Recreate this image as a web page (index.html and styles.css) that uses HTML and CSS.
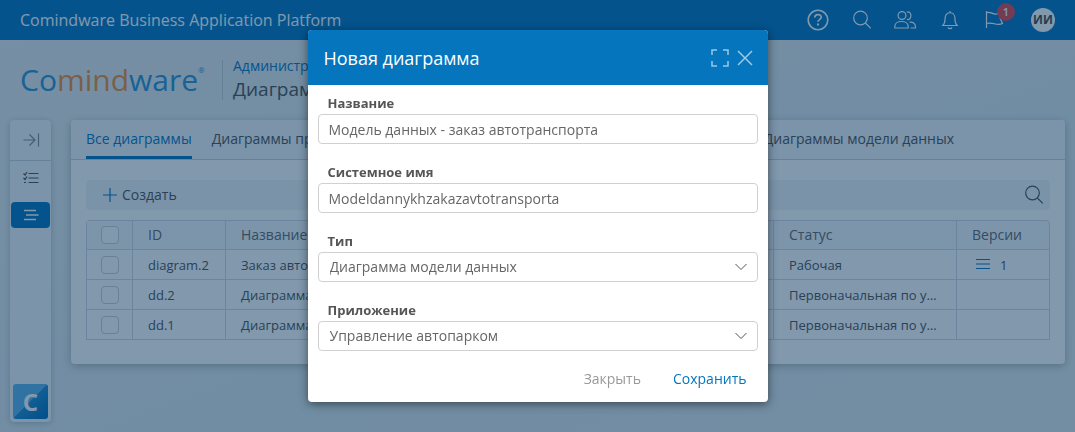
FILE: index.html
```html
<!DOCTYPE html>
<html lang="ru">
<head>
    <meta charset="UTF-8">
    <title>Comindware Business Application Platform</title>
    <link rel="stylesheet" href="styles.css">
</head>
<body>

<header class="topbar">
    <div class="topbar-title">Comindware Business Application Platform</div>
    <button class="icon-btn" aria-label="Справка">
        <svg width="24" height="24" viewBox="0 0 24 24"><circle cx="12" cy="12" r="9.8" stroke-width="1.6"/><path d="M8.8 9.6c0-4 6.400-4 6.400-.4 0 2.400-3.200 2.400-3.200 4.600" stroke-width="1.700"/><path d="M12 15.500v2" stroke-width="2"/></svg>
    </button>
    <button class="icon-btn" aria-label="Поиск">
        <svg width="24" height="24" viewBox="0 0 24 24"><circle cx="10.500" cy="10" r="6.800"/><path d="M15.400 15l5.400 5.400"/></svg>
    </button>
    <button class="icon-btn" aria-label="Пользователи">
        <svg width="24" height="24" viewBox="0 0 24 24"><circle cx="8" cy="7.500" r="3.900"/><path d="M.8 20v-1.500c0-6.700 13.400-6.700 13.400 0V20zM12.800 4.200c5.400-2 5.400 8.600.2 7.200M15.500 14.200c3.800-.4 6 1.500 6 4.500V20H16.500"/></svg>
    </button>
    <button class="icon-btn" aria-label="Уведомления">
        <svg width="24" height="24" viewBox="0 0 24 24"><path d="M4.800 17.500c2-2 2.300-4 2.300-7.500 0-7 9.800-7 9.800 0 0 3.500.3 5.500 2.300 7.500zM10 19.500c.5 1.500 3.500 1.500 4 0M12 3v1.500"/></svg>
    </button>
    <button class="icon-btn" aria-label="Задачи">
        <svg width="24" height="24" viewBox="0 0 24 24"><path d="M4.500 3v17M4.500 5c3-2.500 6.500 2 10 1 1-.2 2-.5 6-1l-2.500 5 2.500 5.500c-6 3-9.500-2-16 0"/></svg>
        <span class="badge">1</span>
    </button>
    <button class="avatar">ИИ</button>
</header>

<div class="heading">
    <div class="logo">Co<span>mind</span>ware<sup>®</sup></div>
    <div class="crumbs">
        <a href="#">Администрирование</a>
        <h1>Диаграммы</h1>
    </div>
</div>

<div class="layout">
    <nav class="sidebar">
        <button class="side-toggle" aria-label="Развернуть">
            <svg width="18" height="18" viewBox="0 0 18 18"><path d="M1.500 9h11M7.500 3.500L13 9l-5.500 5.500M16.500 2.500v13"/></svg>
        </button>
        <button class="side-item" aria-label="Задачи">
            <svg width="18" height="18" viewBox="0 0 18 18"><path d="M6.500 4.500h10M6.500 9h10M6.500 13.500h10M1.500 4.500L3 6l2-3M1.500 9L3 10.500l2-3M2 13.500h2"/></svg>
        </button>
        <button class="side-item active" aria-label="Диаграммы">
            <svg width="18" height="18" viewBox="0 0 18 18"><path d="M2 4.500h12M4 9h12.500M2 13.500h12" stroke-width="1.500"/></svg>
        </button>
        <a class="side-logo" href="#" aria-label="Comindware">C</a>
    </nav>

    <main class="panel">
        <div class="tabs">
            <button class="tab active">Все диаграммы</button>
            <button class="tab wide">Диаграммы процессов</button>
            <button class="tab">Диаграммы модели данных</button>
        </div>
        <div class="panel-body">
            <div class="toolbar">
                <button class="create">
                    <svg width="14" height="14" viewBox="0 0 14 14"><path d="M7 0v14M0 7h14"/></svg>
                    Создать
                </button>
                <button class="icon-btn" aria-label="Поиск">
                    <svg width="24" height="24" viewBox="0 0 24 24"><circle cx="10.500" cy="10" r="6.800"/><path d="M15.400 15l5.400 5.400"/></svg>
                </button>
            </div>
            <table>
                <colgroup>
                    <col class="col-check">
                    <col class="col-id">
                    <col>
                    <col class="col-status">
                    <col class="col-versions">
                </colgroup>
                <thead>
                <tr>
                    <th><input type="checkbox" aria-label="Выбрать все"></th>
                    <th>ID</th>
                    <th>Название</th>
                    <th>Статус</th>
                    <th>Версии</th>
                </tr>
                </thead>
                <tbody>
                <tr>
                    <td><input type="checkbox" aria-label="diagram.2"></td>
                    <td>diagram.2</td>
                    <td>Заказ автотранспорта</td>
                    <td>Рабочая</td>
                    <td class="versions"><svg width="14" height="12" viewBox="0 0 14 12"><path d="M0 1.500h14M0 6h14M0 10.500h14"/></svg>1</td>
                </tr>
                <tr>
                    <td><input type="checkbox" aria-label="dd.2"></td>
                    <td>dd.2</td>
                    <td>Диаграмма</td>
                    <td>Первоначальная по умолчанию</td>
                    <td></td>
                </tr>
                <tr>
                    <td><input type="checkbox" aria-label="dd.1"></td>
                    <td>dd.1</td>
                    <td>Диаграмма</td>
                    <td>Первоначальная по умолчанию</td>
                    <td></td>
                </tr>
                </tbody>
            </table>
        </div>
    </main>
</div>

<div class="overlay">
    <form class="modal" role="dialog" aria-labelledby="modal-title">
        <div class="modal-header">
            <h2 id="modal-title">Новая диаграмма</h2>
            <button type="button" aria-label="Развернуть">
                <svg width="18" height="18" viewBox="0 0 18 18"><path d="M1 6V1h5M12 1h5v5M17 12v5h-5M6 17H1v-5"/></svg>
            </button>
            <button type="button" aria-label="Закрыть окно">
                <svg width="18" height="18" viewBox="0 0 18 18"><path d="M2 2l14 14M16 2L2 16"/></svg>
            </button>
        </div>
        <div class="modal-body">
            <div class="field">
                <label for="name">Название</label>
                <input id="name" type="text" value="Модель данных - заказ автотранспорта">
            </div>
            <div class="field">
                <label for="alias">Системное имя</label>
                <input id="alias" type="text" value="Modeldannykhzakazavtotransporta">
            </div>
            <div class="field">
                <label for="type">Тип</label>
                <div class="select">
                    <select id="type">
                        <option>Диаграмма модели данных</option>
                    </select>
                    <svg width="12" height="8" viewBox="0 0 12 8"><path d="M.5 1L6 6.500 11.500 1"/></svg>
                </div>
            </div>
            <div class="field">
                <label for="app">Приложение</label>
                <div class="select">
                    <select id="app">
                        <option>Управление автопарком</option>
                    </select>
                    <svg width="12" height="8" viewBox="0 0 12 8"><path d="M.5 1L6 6.500 11.500 1"/></svg>
                </div>
            </div>
        </div>
        <div class="modal-footer">
            <button type="button">Закрыть</button>
            <button type="submit" class="primary">Сохранить</button>
        </div>
    </form>
</div>

</body>
</html>
```
FILE: styles.css
```css
* {
    box-sizing: border-box;
}

body {
    margin: 0;
    min-height: 100vh;
    display: flex;
    flex-direction: column;
    font: 14px/20px "Open Sans", sans-serif;
    color: #505050;
    background: linear-gradient(160deg, #e9ecea, #dfe9ea 60%, #e4e9ea);
}

button, input, select {
    font: inherit;
    color: inherit;
}

button {
    padding: 0;
    border: 0;
    background: none;
}

a {
    color: #0575bd;
    text-decoration: none;
}

svg {
    display: block;
    fill: none;
    stroke: currentColor;
    stroke-width: 1.2;
}

/* top bar */

.topbar {
    display: flex;
    align-items: center;
    gap: 20px;
    height: 40px;
    padding: 0 20px;
    color: #fff;
    background: #0575bd;
}

.topbar-title {
    flex: 1;
    font-size: 16px;
}

.icon-btn {
    position: relative;
    width: 24px;
    height: 24px;
}

.badge {
    position: absolute;
    top: -5px;
    right: -9px;
    width: 18px;
    height: 18px;
    border-radius: 9px;
    font-size: 11px;
    line-height: 18px;
    font-weight: 600;
    background: #e0474c;
}

.avatar {
    width: 24px;
    height: 24px;
    margin-left: 5px;
    border-radius: 50%;
    font-size: 12px;
    font-weight: 700;
    color: #444;
    background: #fff;
}

/* heading */

.heading {
    display: flex;
    align-items: center;
    height: 80px;
    padding-left: 20px;
}

.logo {
    display: flex;
    width: 202px;
    font-size: 30px;
    line-height: 40px;
    font-weight: 400;
    color: #2b92d0;
}

.logo span {
    color: #ee8f35;
}

.logo sup {
    font-size: 8px;
    line-height: 20px;
}

.crumbs {
    height: 40px;
    padding-left: 10px;
    border-left: 1px solid #c5cfd6;
}

.crumbs a {
    display: block;
    line-height: 12px;
}

.crumbs h1 {
    margin: 0;
    font-size: 19px;
    line-height: 34px;
    font-weight: 400;
}

/* layout */

.layout {
    flex: 1;
    display: flex;
    align-items: flex-start;
    gap: 20px;
    padding: 0 10px 10px;
}

.sidebar {
    align-self: stretch;
    display: flex;
    flex-direction: column;
    align-items: center;
    width: 41px;
    border-radius: 4px;
    background: #f3f6f8;
    box-shadow: 0 1px 6px rgba(0, 0, 0, .2);
}

.sidebar button {
    display: flex;
    align-items: center;
    justify-content: center;
}

.side-toggle {
    width: 100%;
    height: 41px;
    border-bottom: 1px solid #c9d0d8;
    color: #888;
}

.side-item {
    width: 39px;
    height: 26px;
    margin-top: 4px;
    border-radius: 4px;
}

.side-item + .side-item {
    margin-top: 11px;
}

.side-item.active {
    color: #fff;
    background: #0575bd;
}

.side-logo {
    width: 35px;
    height: 35px;
    margin: auto 0 3px;
    border-radius: 3px;
    font-size: 24px;
    line-height: 35px;
    font-weight: 700;
    text-align: center;
    color: #fff;
    background: linear-gradient(135deg, #5cb5ea 50%, #1f8bd0 50%, #0069b5);
}

.panel {
    flex: 1;
    min-width: 0;
    border-radius: 4px;
    background: #fff;
    box-shadow: 0 2px 8px rgba(0, 0, 0, .25);
}

.tabs {
    display: flex;
    gap: 20px;
    height: 40px;
    padding: 0 15px;
    border-bottom: 1px solid #c9d0d8;
    border-radius: 4px 4px 0 0;
    background: #f3f6f8;
}

.tab {
    padding-top: 2px;
    border-bottom: 3px solid transparent;
    text-align: left;
}

.tab.wide {
    width: 532px;
}

.tab.active {
    color: #0575bd;
    border-color: #0575bd;
}

.panel-body {
    padding: 20px 15px 24px;
}

.toolbar {
    display: flex;
    align-items: center;
    justify-content: space-between;
    height: 30px;
    margin-bottom: 10px;
    padding: 0 4px 0 17px;
    border-radius: 4px;
    background: #f2f5f6;
}

.create {
    display: flex;
    align-items: center;
    gap: 5px;
}

.create svg {
    color: #0575bd;
}

/* table */

table {
    width: 100%;
    table-layout: fixed;
    border-spacing: 0;
    border: 1px solid #d2d9e0;
    border-width: 1px 0 0 1px;
    border-radius: 4px 4px 0 0;
}

.col-check {
    width: 46px;
}

.col-id {
    width: 93px;
}

.col-status {
    width: 183px;
}

.col-versions {
    width: 93px;
}

th, td {
    height: 30px;
    padding: 0 15px;
    border: 1px solid #d2d9e0;
    border-width: 0 1px 1px 0;
    font-size: 13px;
    text-align: left;
    white-space: nowrap;
    overflow: hidden;
    text-overflow: ellipsis;
}

th {
    height: 29px;
    font-size: 14px;
    font-weight: 400;
    color: #666;
    background: #f7f8fa;
}

th:first-child, td:first-child {
    padding-left: 14px;
    text-overflow: clip;
}

th:last-child {
    border-top-right-radius: 4px;
}

input[type="checkbox"] {
    display: block;
    appearance: none;
    width: 18px;
    height: 18px;
    margin: 0;
    border: 1px solid #c9d0d8;
    border-radius: 4px;
    background: #fff;
}

.versions svg {
    display: inline-block;
    margin: 0 10px 0 4px;
    color: #0575bd;
}

/* modal */

.overlay {
    position: fixed;
    inset: 0;
    display: flex;
    align-items: flex-start;
    justify-content: center;
    padding-top: 30px;
    background: rgba(3, 50, 92, .5);
}

.modal {
    width: 460px;
    border-radius: 4px;
    overflow: hidden;
    color: #555;
    background: #fff;
    box-shadow: 0 2px 10px rgba(0, 0, 0, .5);
}

.modal-header {
    display: flex;
    align-items: center;
    gap: 7px;
    height: 55px;
    padding: 0 14px 0 16px;
    color: #fff;
    background: #0575bd;
}

.modal-header h2 {
    flex: 1;
    margin: 0;
    font-size: 18px;
    font-weight: 500;
}

.modal-header svg {
    stroke-width: 1.5;
    opacity: .6;
}

.modal-body {
    display: grid;
    gap: 19px;
    padding: 9px 10px 13px;
}

.field label {
    display: block;
    margin-bottom: 2px;
    padding-left: 10px;
    font-size: 13px;
    line-height: 18px;
    font-weight: 700;
}

.field input, .field select {
    display: block;
    width: 100%;
    height: 30px;
    padding: 0 10px;
    border: 1px solid #d0d0d0;
    border-radius: 4px;
    background: #fff;
    color: #666;
}

.field select {
    appearance: none;
    padding-left: 11px;
}

.select {
    position: relative;
}

.select svg {
    position: absolute;
    top: 11px;
    right: 11px;
    stroke-width: 1;
    pointer-events: none;
}

.modal-footer {
    display: flex;
    justify-content: flex-end;
    gap: 10px;
    padding: 0 10px 8px;
}

.modal-footer button {
    height: 30px;
    padding: 0 11px;
    color: #999;
}

.modal-footer .primary {
    color: #0575bd;
}
```
